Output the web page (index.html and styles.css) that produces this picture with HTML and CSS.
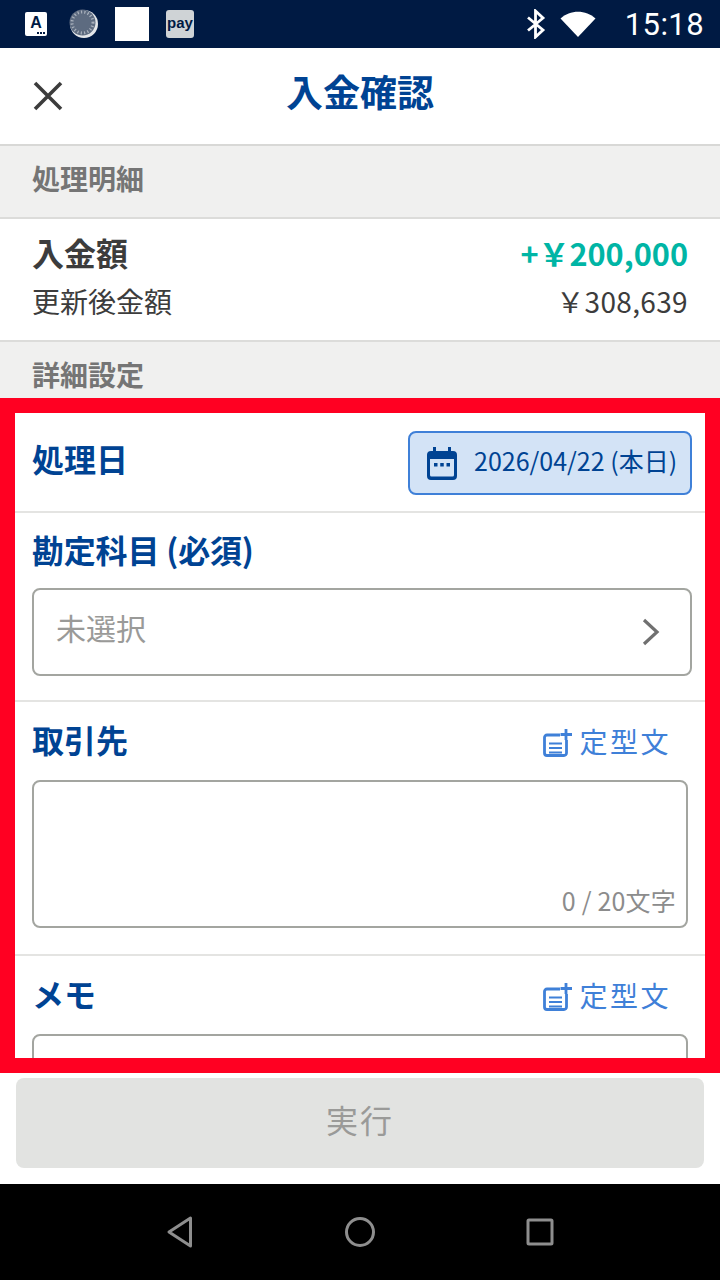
FILE: index.html
```html
<!DOCTYPE html>
<html lang="ja">
<head>
<meta charset="UTF-8">
<title>入金確認</title>
<link rel="stylesheet" href="styles.css">
</head>
<body>
  <!-- Status bar -->
  <div class="status-bar">
    <div class="status-left">
      <span class="ic-a">A<i class="ic-a-dots"></i></span>
      <svg class="ic-disc" width="30" height="30" viewBox="0 0 30 30">
        <circle cx="15" cy="15" r="14" fill="#e4e7ea"/>
        <circle cx="13.500" cy="13.500" r="13" fill="#5d6b80"/>
        <circle cx="13.500" cy="13.500" r="10.500" fill="none" stroke="#aab2bd" stroke-width="3" stroke-dasharray="1.2 2.2"/>
      </svg>
      <span class="ic-blank"></span>
      <span class="ic-pay">pay</span>
    </div>
    <div class="status-right">
      <svg width="22" height="30" viewBox="0 0 22 30" fill="none" stroke="#fff" stroke-width="2.800">
        <path d="M3 8.500 L18 21 L10.500 28 V2 L18 9 L3 21.500"/>
      </svg>
      <svg class="ic-wifi" width="36" height="26" viewBox="0 0 36 26"><path d="M0.500 7.500 C10 -1.500 26 -1.500 35.500 7.500 L18 26 Z" fill="#fff"/></svg>
      <span class="clock">15:18</span>
    </div>
  </div>

  <!-- Header -->
  <div class="header">
    <svg class="ic-close" width="30" height="30" viewBox="0 0 30 30" stroke="#3c3c3c" stroke-width="3.600" fill="none">
      <path d="M2 2 L28 28 M28 2 L2 28"/>
    </svg>
    <div class="title">入金確認</div>
  </div>

  <div class="band band-first">処理明細</div>

  <div class="summary">
    <div class="summary-row">
      <span class="summary-label">入金額</span>
      <span class="summary-plus">+￥200,000</span>
    </div>
    <div class="summary-row summary-sub">
      <span>更新後金額</span>
      <span class="summary-total">￥308,639</span>
    </div>
  </div>

  <div class="band band-second">詳細設定</div>

  <!-- Form, framed in red -->
  <div class="frame">
    <div class="form-row row-date">
      <span class="form-label">処理日</span>
      <div class="date-btn">
        <svg width="32" height="34" viewBox="0 0 32 34">
          <path d="M7 1 h3 v4 h12 v-4 h3 v4 h2 a4 4 0 0 1 4 4 v21 a4 4 0 0 1 -4 4 h-22 a4 4 0 0 1 -4 -4 v-21 a4 4 0 0 1 4 -4 h2 z M4 13 v16 a1.500 1.500 0 0 0 1.500 1.500 h21 a1.500 1.500 0 0 0 1.500 -1.500 v-16 z" fill="#004393" fill-rule="evenodd"/>
          <rect x="8" y="17" width="3.500" height="3.500" fill="#004393"/>
          <rect x="14.250" y="17" width="3.500" height="3.500" fill="#004393"/>
          <rect x="20.500" y="17" width="3.500" height="3.500" fill="#004393"/>
        </svg>
        <span class="date-text">2026/04/22 (本日)</span>
      </div>
    </div>

    <div class="form-row row-account">
      <div class="form-label label-account">勘定科目 (必須)</div>
      <div class="select-box">
        <span class="select-text">未選択</span>
        <svg width="20" height="30" viewBox="0 0 20 30" fill="none" stroke="#707070" stroke-width="3.200"><path d="M3 3 L16 15 L3 27"/></svg>
      </div>
    </div>

    <div class="form-row row-partner">
      <div class="label-line">
        <span class="form-label">取引先</span>
        <span class="template-link">
          <svg class="ic-template" width="30" height="28" viewBox="0 0 30 28" fill="none" stroke="#3f80d8" stroke-width="2.800">
            <path d="M17 6 H4 a2.500 2.500 0 0 0 -2.500 2.500 V24 a2.500 2.500 0 0 0 2.500 2.500 H21 a2.500 2.500 0 0 0 2.500 -2.500 V11"/>
            <path d="M6 14.500 H19 M6 19 H19 M6 23.500 H19" stroke-width="2"/>
            <path d="M23 0 V11 M17.500 5.500 H29"/>
          </svg>
          定型文
        </span>
      </div>
      <div class="text-box">
        <span class="counter">0 / 20文字</span>
      </div>
    </div>

    <div class="form-row row-memo">
      <div class="label-line">
        <span class="form-label">メモ</span>
        <span class="template-link">
          <svg class="ic-template" width="30" height="28" viewBox="0 0 30 28" fill="none" stroke="#3f80d8" stroke-width="2.800">
            <path d="M17 6 H4 a2.500 2.500 0 0 0 -2.500 2.500 V24 a2.500 2.500 0 0 0 2.500 2.500 H21 a2.500 2.500 0 0 0 2.500 -2.500 V11"/>
            <path d="M6 14.500 H19 M6 19 H19 M6 23.500 H19" stroke-width="2"/>
            <path d="M23 0 V11 M17.500 5.500 H29"/>
          </svg>
          定型文
        </span>
      </div>
      <div class="text-box"></div>
    </div>
  </div>

  <!-- Footer -->
  <div class="footer">
    <div class="run-btn">実行</div>
  </div>

  <!-- Navigation bar -->
  <div class="nav-bar">
    <svg width="28" height="32" viewBox="0 0 28 32" fill="none" stroke="#8e8e8e" stroke-width="3" stroke-linejoin="round"><path d="M24.500 2 V30 L3 16 Z"/></svg>
    <svg width="32" height="32" viewBox="0 0 32 32" fill="none" stroke="#8e8e8e" stroke-width="3"><circle cx="16" cy="16" r="13.500"/></svg>
    <svg width="28" height="28" viewBox="0 0 28 28" fill="none" stroke="#8e8e8e" stroke-width="3" stroke-linejoin="round"><rect x="2" y="2" width="24" height="24" rx="1"/></svg>
  </div>
</body>
</html>
```

FILE: styles.css
```css
* {
  box-sizing: border-box;
}

body {
  margin: 0;
  width: 720px;
  height: 1280px;
  overflow: hidden;
  background: #fff;
  font-family: "Noto Sans CJK JP", "Noto Sans", sans-serif;
  color: #3c3c3c;
}

.status-bar {
  height: 48px;
  background: #001a43;
  display: flex;
  justify-content: space-between;
  align-items: center;
  padding: 0 16px 0 25px;
}

.status-left {
  display: flex;
  align-items: center;
}

.status-right {
  display: flex;
  align-items: center;
}

.ic-a {
  position: relative;
  width: 22px;
  height: 24px;
  background: #fff;
  border-radius: 2px;
  color: #001a43;
  font: bold 16px/21px "Liberation Sans", sans-serif;
  text-align: center;
}

.ic-a-dots {
  position: absolute;
  right: 2px;
  bottom: 2px;
  width: 8px;
  height: 2px;
  background: repeating-linear-gradient(to right, #001a43 0 2px, transparent 2px 3px);
}

.ic-disc {
  margin-left: 22px;
}

.ic-blank {
  width: 34px;
  height: 34px;
  margin-left: 16px;
  background: #fff;
}

.ic-pay {
  width: 28px;
  height: 28px;
  margin-left: 17px;
  background: #cfd3d6;
  border-radius: 3px;
  color: #001a43;
  font: bold 15px/26px "Liberation Sans", sans-serif;
  text-align: center;
}

.ic-wifi {
  margin-left: 13px;
}

.clock {
  margin-left: 29px;
  padding-top: 2px;
  color: #fff;
  font: 31px/48px "Roboto", sans-serif;
  letter-spacing: 0.4px;
}

.header {
  position: relative;
  height: 98px;
  border-bottom: 2px solid #d8d8d6;
  display: flex;
  justify-content: center;
}

.ic-close {
  position: absolute;
  left: 33px;
  top: 33px;
}

.title {
  font-size: 37px;
  font-weight: 700;
  color: #004393;
  line-height: 48px;
  margin-top: 19px;
}

.band {
  background: #f0f0ef;
  color: #757575;
  font-size: 28px;
  font-weight: 700;
  padding-left: 32px;
}

.band-first {
  height: 73px;
  border-bottom: 2px solid #dcdcda;
  line-height: 64px;
}

.band-second {
  height: 58px;
  border-top: 2px solid #dcdcda;
  line-height: 64px;
  overflow: hidden;
}

.summary {
  height: 121px;
  padding: 8px 32px 0;
}

.summary-row {
  display: flex;
  justify-content: space-between;
  align-items: center;
  height: 50px;
}

.summary-label {
  font-size: 32px;
  font-weight: 700;
}

.summary-plus {
  font-size: 30.7px;
  font-weight: 700;
  color: #00b5a5;
}

.summary-sub {
  font-size: 28px;
  height: 46px;
  margin-top: 1px;
}

.summary-total {
  letter-spacing: 0.35px;
}

.frame {
  height: 675px;
  border: 15px solid #ff0022;
  overflow: hidden;
}

.form-row {
  border-bottom: 2px solid #e4e4e2;
  padding: 0 17px;
}

.form-label {
  font-size: 32px;
  font-weight: 700;
  color: #004393;
  line-height: 48px;
}

.label-account {
  letter-spacing: -0.2px;
}

.row-date {
  height: 100px;
  display: flex;
  justify-content: space-between;
  align-items: flex-start;
  padding-top: 21px;
  padding-right: 13px;
}

.date-btn {
  width: 284px;
  height: 64px;
  margin-top: -3px;
  background: #d3e3f6;
  border: 2px solid #3f80d8;
  border-radius: 8px;
  color: #004393;
  font-size: 25px;
  display: flex;
  align-items: center;
  gap: 16px;
  padding-left: 16px;
}

.date-btn svg {
  flex-shrink: 0;
}

.date-text {
  white-space: nowrap;
  margin-top: -7px;
}

.row-account {
  height: 189px;
  padding-top: 12px;
  padding-right: 13px;
}

.select-box {
  height: 88px;
  margin-top: 15px;
  border: 2px solid #a3a5a0;
  border-radius: 8px;
  display: flex;
  justify-content: space-between;
  align-items: center;
  padding: 0 29px 0 22px;
  color: #9a9a98;
  font-size: 30px;
}

.select-text {
  margin-bottom: 10px;
}

.row-partner {
  height: 254px;
  padding-top: 12px;
}

.row-memo {
  border-bottom: none;
  padding-top: 12px;
}

.label-line {
  display: flex;
  justify-content: space-between;
  align-items: center;
  height: 48px;
}

.label-line .form-label {
  margin-top: 2px;
}

.template-link {
  display: flex;
  align-items: center;
  gap: 6px;
  margin-top: 6px;
  padding-right: 17px;
  color: #3f80d8;
  font-size: 28px;
  letter-spacing: 2.5px;
}

.ic-template {
  margin-top: 4px;
}

.text-box {
  position: relative;
  height: 148px;
  margin-top: 18px;
  border: 2px solid #a3a5a0;
  border-radius: 8px;
}

.counter {
  position: absolute;
  right: 10px;
  bottom: 8px;
  color: #8c8c8c;
  font-size: 25px;
  letter-spacing: 0.2px;
}

.footer {
  height: 111px;
  padding: 5px 16px 0;
}

.run-btn {
  height: 90px;
  background: #e2e3e1;
  border-radius: 8px;
  color: #9a9a98;
  font-size: 32px;
  letter-spacing: 2px;
  padding-bottom: 8px;
  display: flex;
  align-items: center;
  justify-content: center;
}

.nav-bar {
  height: 96px;
  background: #000;
  display: flex;
  align-items: center;
  justify-content: center;
  gap: 150px;
}
```
